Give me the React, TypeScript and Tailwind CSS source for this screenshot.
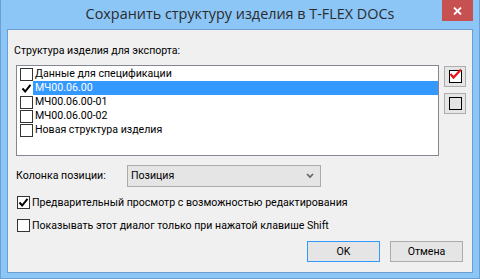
import React from 'react';

// элементы структуры изделия
const items = [
  { label: 'Данные для спецификации', checked: false, selected: false },
  { label: 'МЧ00.06.00', checked: true, selected: true },
  { label: 'МЧ00.06.00-01', checked: false, selected: false },
  { label: 'МЧ00.06.00-02', checked: false, selected: false },
  { label: 'Новая структура изделия', checked: false, selected: false },
];

const font = { fontFamily: 'Roboto, "Open Sans", sans-serif' };

const CheckMark = ({ color = '#000' }: { color?: string }) => (
  <svg width="11" height="11" viewBox="0 0 11 11">
    <path d="M1.5 5.5 L4.2 8.5 L9.5 1.8" fill="none" stroke={color} strokeWidth="2" />
  </svg>
);

const Box = ({ checked }: { checked?: boolean }) => (
  <div className="w-[13px] h-[13px] border border-[#333] bg-white flex items-center justify-center shrink-0">
    {checked && <CheckMark />}
  </div>
);

const App = () => {
  return (
    <div className="w-[480px] h-[279px] bg-[#8cc6f7] border-x border-b border-[#6b9fd3] flex flex-col text-[10.6px] text-black" style={font}>
      {/* заголовок окна */}
      <div className="relative h-[29px] flex items-center justify-center">
        <span className="text-[14.4px] text-[#2b2b2b] mt-[-1px]" style={{ fontFamily: '"Open Sans", sans-serif' }}>
          Сохранить структуру изделия в T-FLEX DOCs
        </span>
        <div className="absolute right-[6px] top-0 w-[31px] h-[21px] bg-[#c75050] flex items-center justify-center">
          <svg width="9" height="8" viewBox="0 0 9 8">
            <path d="M1 0.5 L8 7.5 M8 0.5 L1 7.5" stroke="#fff" strokeWidth="1.8" />
          </svg>
        </div>
      </div>

      {/* клиентская область */}
      <div className="flex-1 mx-[6px] mb-[5px] border border-[#6b9fd3] bg-[#f0f0f0] flex flex-col pl-[8px] pr-[5px] pt-[13px]">
        <div className="h-[16px] leading-[16px] -ml-[2px]">Структура изделия для экспорта:</div>

        <div className="flex mt-[6px]">
          <div className="w-[423px] h-[91px] shrink-0 border border-[#828790] bg-white pt-[1px] pl-[3px]">
            {items.map((it) => (
              <div key={it.label} className="flex items-center h-[14px]">
                {it.checked ? (
                  <div className="w-[13px] h-[13px] flex items-center justify-center shrink-0">
                    <CheckMark />
                  </div>
                ) : (
                  <div className="w-[13px] h-[13px] border border-[#333] shrink-0" />
                )}
                <div className={`flex-1 h-[14px] leading-[14px] pl-[2px] ${it.selected ? 'bg-[#3399ff] text-white' : ''}`}>
                  {it.label}
                </div>
              </div>
            ))}
          </div>

          <div className="flex flex-col ml-[5px] pt-[1px] shrink-0">
            <div className="w-[22px] h-[21px] border border-[#adadad] bg-[#e5e5e5] flex items-center justify-center">
              <div className="relative w-[13px] h-[13px] border border-black bg-white">
                <svg className="absolute left-[-1px] top-[-3px]" width="14" height="12" viewBox="0 0 14 12">
                  <path d="M1.5 6 L4.5 9.5 L12 1.5" fill="none" stroke="#e8141c" strokeWidth="2.2" />
                </svg>
              </div>
            </div>
            <div className="w-[22px] h-[21px] mt-[6px] border border-[#adadad] bg-[#e5e5e5] flex items-center justify-center">
              <div className="w-[13px] h-[13px] border border-black" />
            </div>
          </div>
        </div>

        <div className="flex items-center mt-[9px]">
          <div className="w-[111px] shrink-0">Колонка позиции:</div>
          <div className="w-[194px] h-[22px] border border-[#acacac] bg-[#e5e5e5] flex items-center justify-between pl-[3px] pr-[6px]">
            <span>Позиция</span>
            <svg width="8" height="6" viewBox="0 0 8 6">
              <path d="M1 1 L4 4 L7 1" fill="none" stroke="#606060" strokeWidth="1.6" />
            </svg>
          </div>
        </div>

        <div className="flex items-center h-[13px] mt-[9px] ml-[1px]">
          <Box checked />
          <span className="leading-[13px] ml-[2px]">Предварительный просмотр с возможностью редактирования</span>
        </div>
        <div className="flex items-center h-[13px] mt-[10px] ml-[1px]">
          <Box />
          <span className="leading-[13px] ml-[2px]">Показывать этот диалог только при нажатой клавише Shift</span>
        </div>

        <div className="flex justify-end mt-[9px] pr-[4px]">
          <div className="w-[73px] h-[21px] shrink-0 border border-[#3399ff] bg-[#e5e5e5] flex items-center justify-center">OK</div>
          <div className="w-[73px] h-[21px] shrink-0 ml-[10px] border border-[#acacac] bg-[#e5e5e5] flex items-center justify-center">Отмена</div>
        </div>
      </div>
    </div>
  );
};

export default App;
